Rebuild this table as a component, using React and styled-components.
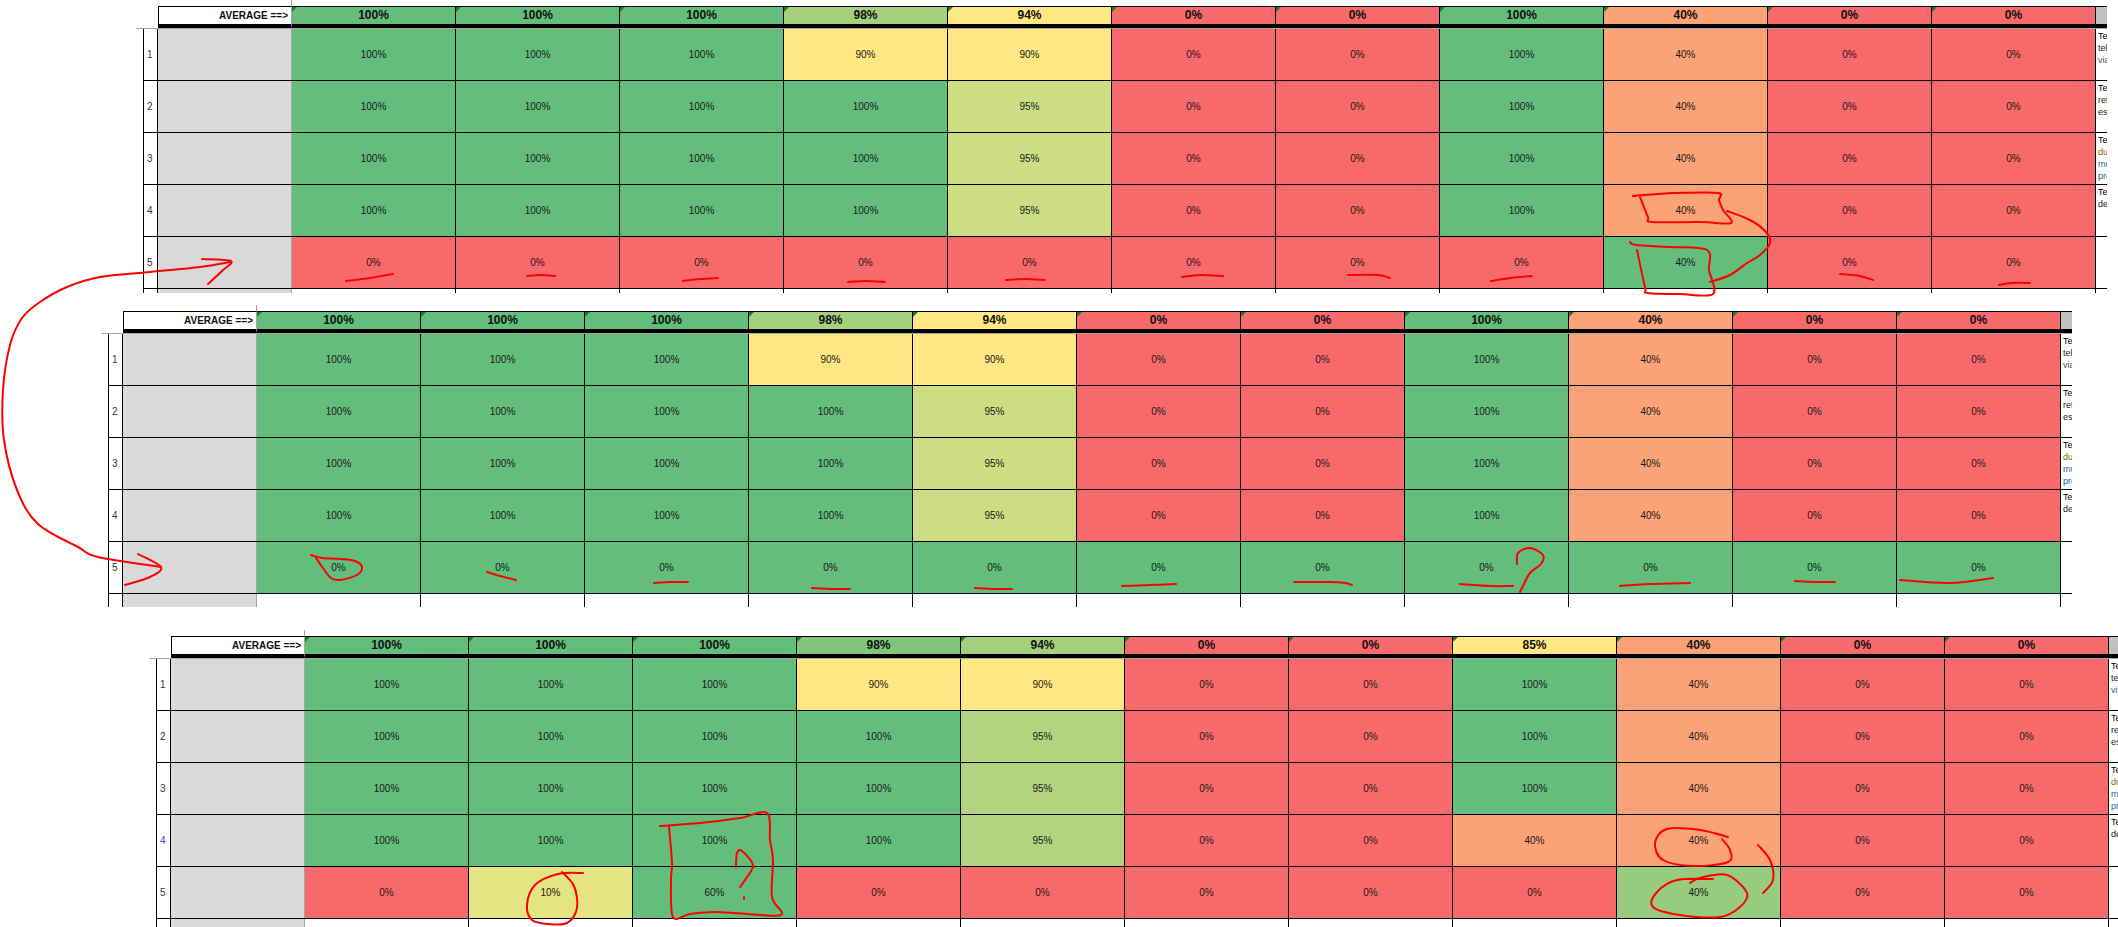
import styled, { createGlobalStyle } from 'styled-components'

const GlobalStyle = createGlobalStyle`
  html, body {
    margin: 0;
    padding: 0;
    background: #fff;
  }
  body {
    font-family: "Liberation Sans", Arial, sans-serif;
    overflow: hidden;
  }
`

const C = {
  g: '#63BE7B',
  r: '#F8696B',
  y: '#FFE884',
  o: '#FBA276',
  lg: '#A5D07E',
  yg: '#CDDD82',
  mg: '#7FC57C',
  hg: '#A3CF7E',
  g95: '#B0D480',
  y10: '#E5E483',
  g40: '#97CB7D',
}

const g100 = ['100%', C.g]
const r0 = ['0%', C.r]
const o40 = ['40%', C.o]

const headA = [g100, g100, g100, ['98%', C.lg], ['94%', C.y], r0, r0, g100, o40, r0, r0]
const rowA = [g100, g100, g100, ['90%', C.y], ['90%', C.y], r0, r0, g100, o40, r0, r0]
const rowB = [g100, g100, g100, g100, ['95%', C.yg], r0, r0, g100, o40, r0, r0]
const rowC = [g100, g100, g100, g100, ['95%', C.g95], r0, r0, g100, o40, r0, r0]

const comments = [
  [['Teste de', '#000'], ['tela inicial', '#222'], ['via menu', '#44546A']],
  [['Teste de', '#000'], ['retorno', '#222'], ['esperado', '#222']],
  [['Teste de', '#000'], ['durante', '#7F6000'], ['múltiplos', '#2E5C9A'], ['processos', '#2E5C9A']],
  [['Teste de', '#000'], ['desempenho', '#222']],
  [],
]

const sheets = [
  {
    left: 136,
    top: 0,
    strip: 4,
    head: headA,
    rows: [rowA, rowB, rowB, rowB, [r0, r0, r0, r0, r0, r0, r0, r0, ['40%', C.g], r0, r0]],
  },
  {
    left: 101,
    top: 12,
    strip: 13,
    head: headA,
    rows: [rowA, rowB, rowB, rowB, Array(11).fill(['0%', C.g])],
  },
  {
    left: 149,
    top: 23,
    strip: 10,
    active: 3,
    head: [g100, g100, g100, ['98%', C.mg], ['94%', C.hg], r0, r0, ['85%', C.y], o40, r0, r0],
    rows: [
      rowA,
      rowC,
      rowC,
      [g100, g100, g100, g100, ['95%', C.g95], r0, r0, ['40%', C.o], o40, r0, r0],
      [r0, ['10%', C.y10], ['60%', C.g], r0, r0, r0, r0, r0, ['40%', C.g40], r0, r0],
    ],
  },
]

// red pen marks drawn over the screenshot
const strokes = [
  // long arrow from sheet 1 to sheet 2
  [[230, 262], [200, 267], [150, 272], [100, 277], [67, 287], [40, 302], [22, 318], [10, 345], [3, 390], [4, 440], [17, 490], [38, 524], [78, 547], [98, 557], [161, 567]],
  [[202, 259], [231, 261], [222, 271], [208, 284]],
  [[138, 554], [161, 567], [150, 577], [125, 585]],
  // sheet 1 underlines
  [[346, 281], [370, 278], [393, 274]],
  [[527, 276], [541, 275], [555, 276]],
  [[683, 281], [700, 279], [718, 278]],
  [[848, 282], [866, 281], [885, 282]],
  [[1006, 280], [1025, 279], [1045, 280]],
  [[1182, 277], [1200, 275], [1223, 276]],
  [[1348, 275], [1378, 275], [1390, 278]],
  [[1491, 281], [1510, 278], [1532, 276]],
  [[1840, 274], [1860, 276], [1873, 280]],
  [[1999, 285], [2012, 283], [2030, 283]],
  // sheet 1 boxes on column 9
  [[1633, 196], [1675, 193], [1718, 193], [1719, 200], [1723, 210], [1731, 223], [1700, 222], [1652, 222], [1648, 217], [1640, 197]],
  [[1630, 242], [1636, 245], [1670, 247], [1707, 250], [1709, 270], [1713, 294], [1680, 294], [1648, 293], [1645, 287], [1637, 250]],
  [[1727, 211], [1750, 220], [1766, 232], [1770, 243], [1760, 255], [1747, 263], [1730, 275], [1710, 282]],
  // sheet 2 marks
  [[311, 555], [322, 558], [340, 559], [355, 561], [362, 567], [357, 575], [340, 580], [331, 578], [323, 568], [316, 558]],
  [[487, 572], [500, 576], [516, 580]],
  [[654, 583], [670, 582], [688, 582]],
  [[812, 588], [832, 589], [850, 589]],
  [[975, 588], [994, 589], [1012, 589]],
  [[1122, 586], [1150, 585], [1176, 584]],
  [[1294, 582], [1330, 582], [1345, 583], [1352, 585]],
  [[1460, 584], [1490, 586], [1513, 586]],
  [[1517, 564], [1518, 553], [1530, 548], [1543, 555], [1541, 564], [1530, 573], [1523, 586], [1520, 592]],
  [[1620, 586], [1650, 584], [1690, 583]],
  [[1795, 581], [1815, 582], [1835, 582]],
  [[1900, 580], [1950, 583], [1993, 578]],
  // sheet 3 marks
  [[583, 873], [558, 874], [535, 885], [527, 905], [532, 920], [548, 924], [567, 923], [577, 908], [574, 886], [562, 872]],
  [[660, 826], [700, 823], [740, 818], [767, 813], [770, 840], [773, 860], [772, 897], [782, 914], [760, 915], [717, 912], [690, 914], [673, 917], [671, 880], [672, 863], [669, 827]],
  [[736, 867], [737, 853], [742, 851], [753, 865], [747, 877], [740, 887]],
  [[744, 897], [744, 899]],
  [[1728, 837], [1700, 830], [1667, 829], [1655, 843], [1663, 860], [1693, 866], [1728, 862], [1730, 850], [1722, 839]],
  [[1690, 883], [1700, 878], [1727, 875], [1747, 893], [1740, 907], [1720, 917], [1680, 915], [1653, 907], [1657, 892], [1677, 880], [1713, 879]],
  [[1758, 845], [1770, 860], [1773, 880], [1763, 893]],
]

function smooth(pts) {
  let d = `M${pts[0][0]},${pts[0][1]}`
  for (let i = 0; i < pts.length - 1; i++) {
    const p0 = pts[i - 1] || pts[i]
    const p1 = pts[i]
    const p2 = pts[i + 1]
    const p3 = pts[i + 2] || p2
    const c1x = p1[0] + (p2[0] - p0[0]) / 6
    const c1y = p1[1] + (p2[1] - p0[1]) / 6
    const c2x = p2[0] - (p3[0] - p1[0]) / 6
    const c2y = p2[1] - (p3[1] - p1[1]) / 6
    d += ` C${c1x},${c1y} ${c2x},${c2y} ${p2[0]},${p2[1]}`
  }
  return d
}

export default function App() {
  return (
    <Page>
      <GlobalStyle />
      {sheets.map((s, si) => (
        <Sheet key={si} $left={s.left} $top={s.top}>
          <Gutter />
          <HeadRow>
            <AverageCell>AVERAGE ==&gt;</AverageCell>
            {s.head.map(([v, c], i) => (
              <HeadCell key={i} $bg={c}>
                {v}
              </HeadCell>
            ))}
            <HeadTail />
          </HeadRow>
          {s.rows.map((row, ri) => (
            <Row key={ri}>
              <RowNum $active={s.active === ri}>{ri + 1}</RowNum>
              <Label />
              {row.map(([v, c], i) => (
                <Cell key={i} $bg={c}>
                  {v}
                </Cell>
              ))}
              <Comment>
                {comments[ri].map(([t, col], li) => (
                  <Line key={li} $color={col}>
                    {t}
                  </Line>
                ))}
              </Comment>
            </Row>
          ))}
          <Row $height={s.strip} $open>
            <RowNum />
            <Label />
            {s.head.map((_, i) => (
              <Cell key={i} $bg="#fff" />
            ))}
            <Comment />
          </Row>
        </Sheet>
      ))}
      <Ink viewBox="0 0 2118 927" width="2118" height="927">
        {strokes.map((p, i) => (
          <path key={i} d={smooth(p)} />
        ))}
      </Ink>
    </Page>
  )
}

const Page = styled.div`
  position: relative;
  width: 2118px;
  height: 927px;
  overflow: hidden;
  display: flex;
  flex-direction: column;
  background: #fff;
`

const Sheet = styled.section`
  flex-shrink: 0;
  width: 1971px;
  margin-left: ${props => props.$left}px;
  margin-top: ${props => props.$top}px;
  overflow: hidden;
`

const Gutter = styled.div`
  width: 156px;
  height: 6px;
  box-sizing: border-box;
  border-right: 1px solid #a6a6a6;
`

const HeadRow = styled.div`
  display: flex;
  padding-left: 22px;
  border-bottom: 1px solid #a6a6a6;
`

const AverageCell = styled.div`
  flex: 0 0 134px;
  height: 22px;
  box-sizing: border-box;
  border-top: 1px solid #000;
  border-left: 1px solid #000;
  border-right: 1px solid #a6a6a6;
  border-bottom: 4px solid #000;
  padding-right: 3px;
  text-align: right;
  font-size: 10px;
  font-weight: bold;
  line-height: 17px;
  color: #111;
`

const HeadCell = styled.div`
  position: relative;
  flex: 0 0 164px;
  height: 22px;
  box-sizing: border-box;
  background: ${props => props.$bg};
  border-top: 1px solid #000;
  border-right: 1px solid #000;
  border-bottom: 4px solid #000;
  text-align: center;
  font-size: 12px;
  font-weight: bold;
  line-height: 17px;
  color: #111;

  &::before {
    content: '';
    position: absolute;
    top: 0;
    left: 0;
    border-top: 5px solid #1d7a1d;
    border-right: 5px solid transparent;
  }
`

const HeadTail = styled.div`
  flex: 1;
  height: 22px;
  box-sizing: border-box;
  background: #c0c0c0;
  border-top: 1px solid #000;
  border-bottom: 4px solid #000;
`

const Row = styled.div`
  display: flex;
  height: ${props => props.$height || 52}px;
  margin-left: 7px;
  box-sizing: border-box;
  border-bottom: ${props => (props.$open ? 'none' : '1px solid #000')};
`

const RowNum = styled.div`
  flex: 0 0 15px;
  box-sizing: border-box;
  border-left: 1px solid #000;
  border-right: 1px solid #000;
  padding-left: 3px;
  display: flex;
  align-items: center;
  font-size: 10px;
  color: ${props => (props.$active ? '#2f5597' : '#333')};
`

const Label = styled.div`
  flex: 0 0 134px;
  box-sizing: border-box;
  background: #d9d9d9;
  border-right: 1px solid #a6a6a6;
`

const Cell = styled.div`
  flex: 0 0 164px;
  box-sizing: border-box;
  background: ${props => props.$bg};
  border-right: 1px solid #000;
  display: flex;
  align-items: center;
  justify-content: center;
  font-size: 10px;
  color: #1a1a1a;
`

const Comment = styled.div`
  flex: 1;
  min-width: 0;
  overflow: hidden;
  padding: 1px 0 0 2px;
  font-size: 9px;
  line-height: 12px;
  white-space: nowrap;
`

const Line = styled.div`
  color: ${props => props.$color};
`

const Ink = styled.svg`
  position: absolute;
  top: 0;
  left: 0;
  pointer-events: none;
  fill: none;
  stroke: #f00;
  stroke-width: 2;
  stroke-linecap: round;
  stroke-linejoin: round;
`
